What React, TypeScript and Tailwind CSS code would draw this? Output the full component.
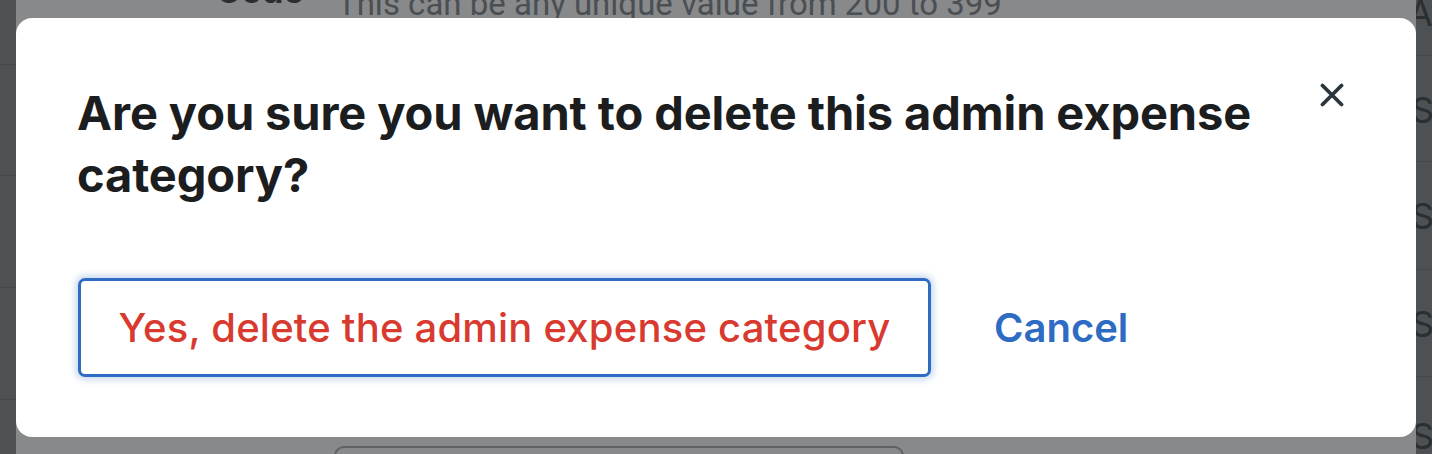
import React from "react";

export default function App() {
  const font = { fontFamily: "Inter, 'Noto Sans', sans-serif" };
  return (
    <div className="w-[1432px] h-[454px] overflow-hidden flex bg-[#4d5153]" style={font}>
      {/* left strip */}
      <div className="w-[16px] shrink-0 flex flex-col">
        <div className="h-[65px] border-b border-[#45484a]" />
        <div className="h-[111px] border-b border-[#45484a]" />
        <div className="h-[112px] border-b border-[#45484a]" />
        <div className="h-[112px] border-b border-[#45484a]" />
      </div>

      {/* middle column */}
      <div className="w-[1400px] shrink-0 flex flex-col bg-[#87898a]">
        <div className="h-[18px] overflow-hidden relative">
          <span className="absolute left-[200px] top-[-26px] text-[34px] font-bold text-[#2b2e30] leading-none">Code</span>
          <span
            className="absolute left-[321px] top-[-13px] text-[33px] text-[#4a4f53] leading-none whitespace-nowrap"
            style={{ fontFamily: "Roboto, sans-serif" }}
          >
            This can be any unique value from 200 to 399
          </span>
        </div>

        {/* modal */}
        <div className="h-[419px] bg-white rounded-[16px] relative px-[61px] pt-[64px]">
          <button className="absolute top-[65px] right-[72px] w-[24px] h-[24px] flex items-center justify-center">
            <svg width="24" height="24" viewBox="0 0 24 24" fill="none">
              <path d="M2.5 2.5 L21.5 21.5 M21.5 2.5 L2.5 21.5" stroke="#2b363c" strokeWidth="3.8" strokeLinecap="round" />
            </svg>
          </button>
          <h1 className="text-[47px] font-bold leading-[62px] text-[#1c1d1f] w-[1200px] tracking-[-0.1px]">
            Are you sure you want to delete this admin expense category?
          </h1>
          <div className="flex items-center mt-[72px]">
            <button className="h-[99px] w-[853px] ml-[1px] rounded-[7px] border-[3px] border-[#2e6bc2] shadow-[0_0_6px_3px_rgba(46,107,194,0.25)] text-[#d83a30] text-[40px] font-medium tracking-[0.2px] flex items-center justify-center">
              Yes, delete the admin expense category
            </button>
            <button className="ml-[63px] text-[#2e6bc2] text-[40px] font-semibold">Cancel</button>
          </div>
        </div>

        <div className="flex-1 relative overflow-hidden">
          <div className="absolute left-[318px] top-[9px] w-[570px] h-[40px] rounded-[10px] border-[2px] border-[#5f6264]" />
        </div>
      </div>

      {/* right strip */}
      <div className="flex-1 flex flex-col overflow-hidden text-[#2c2f31] text-[36px] leading-none whitespace-nowrap">
        <div className="h-[65px] border-b border-[#45484a] -mt-[5px] -ml-[8px]">A</div>
        <div className="h-[111px] border-b border-[#45484a] pt-[36px] -ml-[5px]">St</div>
        <div className="h-[112px] border-b border-[#45484a] pt-[36px] -ml-[5px]">St</div>
        <div className="h-[112px] border-b border-[#45484a] pt-[36px] -ml-[5px]">St</div>
        <div className="pt-[41px] -ml-[5px]">S</div>
      </div>
    </div>
  );
}
